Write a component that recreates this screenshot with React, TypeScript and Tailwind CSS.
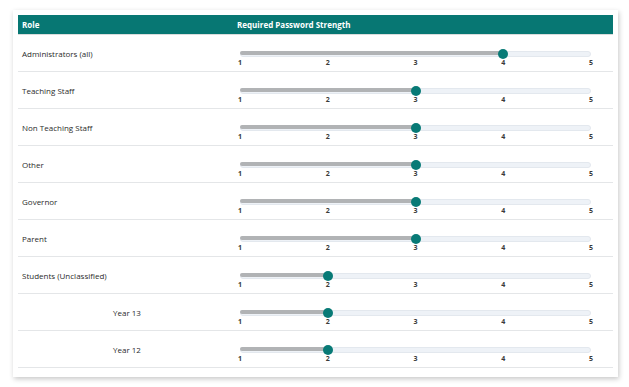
const roles = [
  { name: "Administrators (all)", value: 4, indent: false },
  { name: "Teaching Staff", value: 3, indent: false },
  { name: "Non Teaching Staff", value: 3, indent: false },
  { name: "Other", value: 3, indent: false },
  { name: "Governor", value: 3, indent: false },
  { name: "Parent", value: 3, indent: false },
  { name: "Students (Unclassified)", value: 2, indent: false },
  { name: "Year 13", value: 2, indent: true },
  { name: "Year 12", value: 2, indent: true },
];

const ticks = [1, 2, 3, 4, 5];

function StrengthSlider({ value }: { value: number }) {
  const pct = ((value - 1) / 4) * 100;
  return (
    <div className="flex flex-col w-[351px]">
      {/* track */}
      <div className="relative h-[6px] rounded-full bg-[#eef2f7] border border-[#e3e8ee]">
        <div className="h-full rounded-full bg-[#b1b3b5] -m-px" style={{ width: `${pct}%` }} />
        <div
          className="absolute top-1/2 w-[10px] h-[10px] -ml-[5px] -mt-[5px] rounded-full bg-[#087a76]"
          style={{ left: `${pct}%` }}
        />
      </div>
      {/* tick labels */}
      <div className="flex justify-between mt-[1px]">
        {ticks.map((t) => (
          <div key={t} className="w-0 flex justify-center">
            <span className="text-[7px] leading-[9px] font-bold text-[#3a3a3a]">{t}</span>
          </div>
        ))}
      </div>
    </div>
  );
}

export default function App() {
  return (
    <div className="w-[629px] h-[387px] bg-white pt-[10px] pl-[13px] font-['Open_Sans','Noto_Sans',sans-serif]">
      <div className="w-[605px] h-[367px] bg-white px-[5px] pt-[5px] shadow-[1px_2px_5px_rgba(0,0,0,0.22)]">
        <div className="flex h-[20px] items-center bg-[#077773] border-b border-[#d9dcdc] text-white text-[8px] font-bold">
          <div className="w-[218px] pl-[4px]">Role</div>
          <div className="pl-[1px]">Required Password Strength</div>
        </div>
        {roles.map((r) => (
          <div key={r.name} className="flex h-[37px] items-center border-b border-[#e4e6e8] text-[8px] text-[#2b2b2b]">
            <div className={r.indent ? "w-[218px] pl-[95px] pt-[1px]" : "w-[218px] pl-[4px] pt-[1px]"}>{r.name}</div>
            <div className="pl-[4px] pt-[12px]">
              <StrengthSlider value={r.value} />
            </div>
          </div>
        ))}
      </div>
    </div>
  );
}
